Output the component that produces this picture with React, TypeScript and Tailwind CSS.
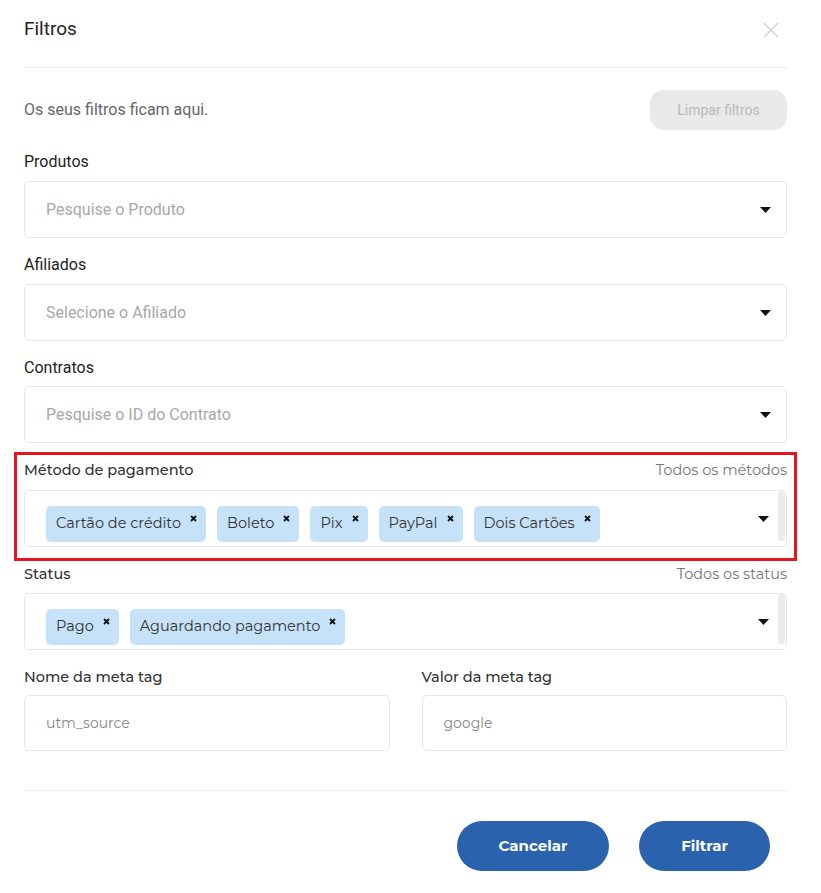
import React from 'react';

function Caret() {
  return (
    <svg width="11" height="6" viewBox="0 0 11 6" className="shrink-0">
      <path d="M0 0 H11 L5.5 6 Z" fill="#111" />
    </svg>
  );
}

function Chip({ label }: { label: string }) {
  return (
    <div className="relative flex h-9 items-center rounded-[5px] bg-[#c6e2f8] pl-[10px] pr-[25px] text-[14.5px] text-[#333]">
      {label}
      <svg width="7" height="7" viewBox="0 0 7 7" className="absolute right-[9px] top-[9px]">
        <path d="M1 1 L6 6 M6 1 L1 6" stroke="#111" strokeWidth="1.8" />
      </svg>
    </div>
  );
}

function SelectBox({ placeholder }: { placeholder: string }) {
  return (
    <div className="flex h-[57px] items-center justify-between rounded-[5px] border border-[#e6e6e6] pl-[21px] pr-[15px]">
      <span className="font-['Roboto'] text-[16px] text-[#a8a8a8]">{placeholder}</span>
      <Caret />
    </div>
  );
}

function ChipSelect({ chips }: { chips: string[] }) {
  return (
    <div className="flex h-[57px] items-start rounded-[5px] border border-[#e6e6e6] pl-[21px]">
      <div className="flex flex-1 items-center gap-[11px] pt-[15px]">
        {chips.map((c) => (
          <Chip key={c} label={c} />
        ))}
      </div>
      <div className="self-center">
        <Caret />
      </div>
      <div className="ml-[9px] mr-[1px] h-[50px] w-[7px] rounded-[3px] bg-[#ebebeb]" />
    </div>
  );
}

export default function App() {
  return (
    <div className="min-h-[893px] bg-white pl-6 pr-[34px] font-['Montserrat','Open_Sans',sans-serif] text-[#222]">
      <div className="flex h-[68px] items-start justify-between border-b border-[#ececec] pt-[18px]">
        <h1 className="font-['Roboto'] text-[19px] leading-[22px] text-[#222]">Filtros</h1>
        <svg width="16" height="16" viewBox="0 0 16 16" className="mr-[8px] mt-[4px]">
          <path d="M1 1 L15 15 M15 1 L1 15" stroke="#cfcfcf" strokeWidth="1.4" />
        </svg>
      </div>

      <div className="flex items-center justify-between pt-[22px]">
        <p className="font-['Roboto'] text-[16px] text-[#666]">Os seus filtros ficam aqui.</p>
        <button className="h-10 w-[137px] rounded-[14px] bg-[#e9e9e9] font-['Roboto'] text-[14px] text-[#b9b9b9]">
          Limpar filtros
        </button>
      </div>

      <div className="mt-[22px] font-['Roboto'] text-[16px] leading-5 text-[#222]">Produtos</div>
      <div className="mt-[9px]">
        <SelectBox placeholder="Pesquise o Produto" />
      </div>

      <div className="mt-[17px] font-['Roboto'] text-[16px] leading-5 text-[#222]">Afiliados</div>
      <div className="mt-[9px]">
        <SelectBox placeholder="Selecione o Afiliado" />
      </div>

      <div className="mt-[17px] font-['Roboto'] text-[16px] leading-5 text-[#222]">Contratos</div>
      <div className="mt-[8px]">
        <SelectBox placeholder="Pesquise o ID do Contrato" />
      </div>

      <div className="-mx-[10px] mt-[9px] border-[3px] border-[#e8141c] px-[7px] pt-[5px] pb-[11px]">
        <div className="flex items-center justify-between text-[14.5px] leading-5">
          <span className="font-medium text-[#333]">Método de pagamento</span>
          <span className="text-[#777]">Todos os métodos</span>
        </div>
        <div className="mt-[10px]">
          <ChipSelect chips={['Cartão de crédito', 'Boleto', 'Pix', 'PayPal', 'Dois Cartões']} />
        </div>
      </div>

      <div className="mt-[3px] flex items-center justify-between text-[14.5px] leading-5">
        <span className="font-medium text-[#333]">Status</span>
        <span className="text-[#777]">Todos os status</span>
      </div>
      <div className="mt-[9px]">
        <ChipSelect chips={['Pago', 'Aguardando pagamento']} />
      </div>

      <div className="mt-[17px] grid grid-cols-2 gap-8">
        <div>
          <div className="text-[14.5px] font-medium leading-5 text-[#333]">Nome da meta tag</div>
          <div className="mt-[8px] flex h-[56px] items-center rounded-[5px] border border-[#e6e6e6] pl-[21px] text-[14px] text-[#888]">
            utm_source
          </div>
        </div>
        <div>
          <div className="text-[14.5px] font-medium leading-5 text-[#333]">Valor da meta tag</div>
          <div className="mt-[8px] flex h-[56px] items-center rounded-[5px] border border-[#e6e6e6] pl-[21px] text-[14px] text-[#888]">
            google
          </div>
        </div>
      </div>

      <div className="mt-[39px] border-t border-[#ececec]" />

      <div className="flex justify-end gap-[30px] pt-[30px] pr-[17px]">
        <button className="h-[50px] w-[152px] rounded-full bg-[#2b62ad] text-[15px] font-bold text-white">
          Cancelar
        </button>
        <button className="h-[50px] w-[131px] rounded-full bg-[#2b62ad] text-[15px] font-bold text-white">
          Filtrar
        </button>
      </div>
    </div>
  );
}
